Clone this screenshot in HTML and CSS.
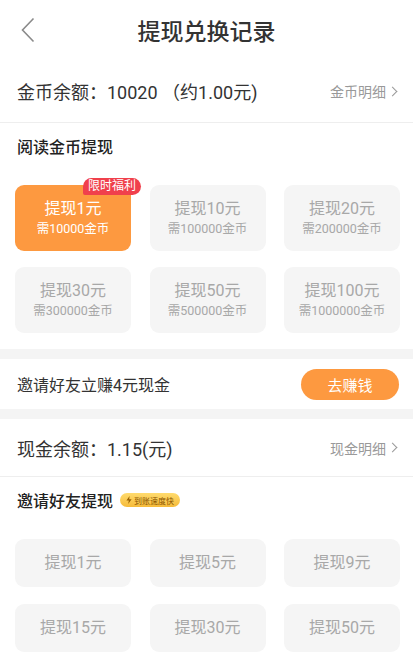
FILE: index.html
```html
<!DOCTYPE html>
<html lang="zh-CN">
<head>
    <meta charset="UTF-8">
    <meta name="viewport" content="width=device-width, initial-scale=1.0">
    <title>提现兑换记录</title>
    <link rel="stylesheet" href="styles.css">
</head>
<body>

    <header class="top-bar">
        <span class="back">
            <svg width="14" height="26" viewBox="0 0 14 26"><path d="M12.5 1.5 L1.5 13 L12.5 24.5" fill="none" stroke="#8a8a8a" stroke-width="1.6"/></svg>
        </span>
        <h1>提现兑换记录</h1>
    </header>

    <!-- 金币 -->
    <div class="balance-row">
        <span class="balance">金币余额：10020 （约1.00元)</span>
        <span class="detail">金币明细<i class="arrow"></i></span>
    </div>

    <div class="section-title">阅读金币提现</div>

    <div class="grid coin-grid">
        <div class="card active">
            <span class="tag">限时福利</span>
            <span class="amount">提现1元</span>
            <span class="need">需10000金币</span>
        </div>
        <div class="card">
            <span class="amount">提现10元</span>
            <span class="need">需100000金币</span>
        </div>
        <div class="card">
            <span class="amount">提现20元</span>
            <span class="need">需200000金币</span>
        </div>
        <div class="card">
            <span class="amount">提现30元</span>
            <span class="need">需300000金币</span>
        </div>
        <div class="card">
            <span class="amount">提现50元</span>
            <span class="need">需500000金币</span>
        </div>
        <div class="card">
            <span class="amount">提现100元</span>
            <span class="need">需1000000金币</span>
        </div>
    </div>

    <div class="invite-row">
        <span>邀请好友立赚4元现金</span>
        <button class="earn-btn">去赚钱</button>
    </div>

    <!-- 现金 -->
    <div class="balance-row cash">
        <span class="balance">现金余额：1.15(元)</span>
        <span class="detail">现金明细<i class="arrow"></i></span>
    </div>

    <div class="section-title">
        邀请好友提现
        <span class="fast">
            <svg width="6" height="8" viewBox="0 0 6 8"><path d="M3.6 0 L0.4 4.6 H2.8 L2.2 8 L5.6 3.2 H3.2 Z" fill="#9a6200"/></svg>
            到账速度快
        </span>
    </div>

    <div class="grid cash-grid">
        <div class="card"><span class="amount">提现1元</span></div>
        <div class="card"><span class="amount">提现5元</span></div>
        <div class="card"><span class="amount">提现9元</span></div>
        <div class="card"><span class="amount">提现15元</span></div>
        <div class="card"><span class="amount">提现30元</span></div>
        <div class="card"><span class="amount">提现50元</span></div>
    </div>

</body>
</html>
```

FILE: styles.css
```css
body {
    margin: 0;
    font-family: Roboto, "Noto Sans CJK SC", sans-serif;
    background: #fff;
    color: #333;
    width: 413px;
    overflow: hidden;
}

.top-bar {
    position: relative;
    height: 60px;
    display: flex;
    align-items: center;
    justify-content: center;
}

.top-bar h1 {
    margin: 0;
    font-size: 23px;
    font-weight: 500;
    color: #333;
}

.back {
    position: absolute;
    left: 21px;
    top: 17px;
    line-height: 0;
}

.balance-row {
    height: 62px;
    padding: 0 17px;
    display: flex;
    align-items: center;
    justify-content: space-between;
    border-bottom: 1px solid #eee;
}

.balance-row.cash {
    height: 57px;
}

.balance {
    font-size: 18px;
    color: #333;
}

.detail {
    font-size: 14px;
    color: #999;
    display: flex;
    align-items: center;
}

.arrow {
    display: inline-block;
    width: 6px;
    height: 6px;
    border-top: 1.3px solid #999;
    border-right: 1.3px solid #999;
    transform: rotate(45deg);
    margin-left: 3px;
}

.section-title {
    height: 46px;
    padding: 0 17px;
    display: flex;
    align-items: center;
    font-size: 16px;
    font-weight: 500;
    color: #222;
}

.fast {
    margin-left: 7px;
    height: 14px;
    padding: 0 6px;
    border-radius: 7px;
    background: linear-gradient(#ffdb6e, #f6bb3a);
    font-size: 8px;
    font-weight: 400;
    color: #8a5500;
    display: flex;
    align-items: center;
    gap: 2px;
}

.grid {
    display: grid;
    grid-template-columns: repeat(3, 116px);
    justify-content: space-between;
    padding: 0 13px 0 15px;
}

.coin-grid {
    row-gap: 16px;
    padding-top: 16px;
    padding-bottom: 16px;
    border-bottom: 10px solid #f4f4f4;
}

.cash-grid {
    row-gap: 17px;
    padding-top: 16px;
}

.card {
    position: relative;
    height: 66px;
    border-radius: 9px;
    background: #f5f5f5;
    display: flex;
    flex-direction: column;
    align-items: center;
    justify-content: center;
    color: #a8a8a8;
}

.cash-grid .card {
    height: 48px;
}

.card .amount {
    font-size: 16px;
    line-height: 22px;
}

.card .need {
    font-size: 12.5px;
    line-height: 18px;
}

.card.active {
    background: #fd9940;
    color: #fff;
}

.tag {
    position: absolute;
    top: -7px;
    right: -10px;
    height: 17px;
    padding: 0 5px;
    border-radius: 9px 9px 9px 2px;
    background: #f0404c;
    color: #fff;
    font-size: 12px;
    line-height: 17px;
}

.invite-row {
    height: 50px;
    padding: 0 14px 0 17px;
    display: flex;
    align-items: center;
    justify-content: space-between;
    font-size: 16px;
    color: #333;
    border-bottom: 10px solid #f4f4f4;
}

.earn-btn {
    width: 98px;
    height: 31px;
    border: none;
    border-radius: 16px;
    background: #fd9940;
    color: #fff;
    font-family: inherit;
    font-size: 15px;
    padding: 0;
}
```
